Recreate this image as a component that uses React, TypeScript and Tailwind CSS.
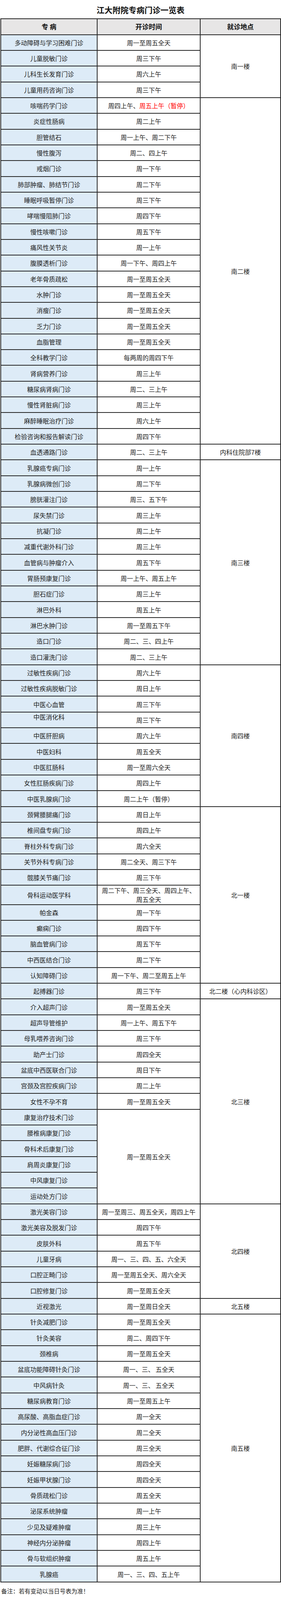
import type { ReactNode } from 'react';

type Row = {
  name: string;
  time?: ReactNode; // undefined = covered by a merged cell above
  timeSpan?: string;
  top?: boolean;
  tall?: boolean;
};

type Group = {
  place: string;
  span: string;
  rows: Row[];
};

const groups: Group[] = [
  {
    place: '南一楼',
    span: 'row-span-4',
    rows: [
      { name: '多动障碍与学习困难门诊', time: '周一至周五全天' },
      { name: '儿童脱敏门诊', time: '周三下午' },
      { name: '儿科生长发育门诊', time: '周六上午' },
      { name: '儿童用药咨询门诊', time: '周三下午' },
    ],
  },
  {
    place: '南二楼',
    span: 'row-span-22',
    rows: [
      {
        name: '咳喘药学门诊',
        time: (
          <>
            周四上午、<span className="text-[#ff0000]">周五上午（暂停）</span>
          </>
        ),
      },
      { name: '炎症性肠病', time: '周二上午' },
      { name: '胆管结石', time: '周一上午、周二下午' },
      { name: '慢性腹泻', time: '周二、四上午' },
      { name: '戒烟门诊', time: '周一下午' },
      { name: '肺部肿瘤、肺结节门诊', time: '周二下午' },
      { name: '睡眠呼吸暂停门诊', time: '周三下午' },
      { name: '哮喘慢阻肺门诊', time: '周四下午' },
      { name: '慢性咳嗽门诊', time: '周五下午' },
      { name: '痛风性关节炎', time: '周一上午' },
      { name: '腹膜透析门诊', time: '周一下午、周四上午' },
      { name: '老年骨质疏松', time: '周一至周五全天' },
      { name: '水肿门诊', time: '周一至周五全天' },
      { name: '消瘦门诊', time: '周一至周五全天' },
      { name: '乏力门诊', time: '周一至周五全天' },
      { name: '血脂管理', time: '周一至周五全天' },
      { name: '全科教学门诊', time: '每两周的周四下午' },
      { name: '肾病营养门诊', time: '周三上午' },
      { name: '糖尿病肾病门诊', time: '周二、三上午' },
      { name: '慢性肾脏病门诊', time: '周三上午' },
      { name: '麻醉睡眠治疗门诊', time: '周六上午' },
      { name: '检验咨询和报告解读门诊', time: '周四下午' },
    ],
  },
  {
    place: '内科住院部7楼',
    span: 'row-span-1',
    rows: [{ name: '血透通路门诊', time: '周二、三上午' }],
  },
  {
    place: '南三楼',
    span: 'row-span-13',
    rows: [
      { name: '乳腺癌专病门诊', time: '周一上午' },
      { name: '乳腺病微创门诊', time: '周二下午' },
      { name: '膀胱灌注门诊', time: '周三、五下午' },
      { name: '尿失禁门诊', time: '周三上午' },
      { name: '抗凝门诊', time: '周二上午' },
      { name: '减重代谢外科门诊', time: '周三上午' },
      { name: '血管病与肿瘤介入', time: '周五下午' },
      { name: '胃肠预康复门诊', time: '周一上午、周五上午' },
      { name: '胆石症门诊', time: '周三上午' },
      { name: '淋巴外科', time: '周五上午' },
      { name: '淋巴水肿门诊', time: '周一至周五下午' },
      { name: '造口门诊', time: '周二、三、四上午' },
      { name: '造口灌洗门诊', time: '周二、三上午' },
    ],
  },
  {
    place: '南四楼',
    span: 'row-span-9',
    rows: [
      { name: '过敏性疾病门诊', time: '周六上午' },
      { name: '过敏性疾病脱敏门诊', time: '周日上午' },
      { name: '中医心血管', time: '周三下午' },
      { name: '中医消化科', time: '周三下午', top: true },
      { name: '中医肝胆病', time: '周六上午' },
      { name: '中医妇科', time: '周五全天' },
      { name: '中医肛肠科', time: '周一至周六全天' },
      { name: '女性肛肠疾病门诊', time: '周四上午' },
      { name: '中医乳腺病门诊', time: '周二上午（暂停）' },
    ],
  },
  {
    place: '北一楼',
    span: 'row-span-11',
    rows: [
      { name: '颈臂腰腿痛门诊', time: '周日上午' },
      { name: '椎间盘专病门诊', time: '周四上午' },
      { name: '脊柱外科专病门诊', time: '周六全天' },
      { name: '关节外科专病门诊', time: '周二全天、周三下午' },
      { name: '髋膝关节痛门诊', time: '周三下午' },
      {
        name: '骨科运动医学科',
        tall: true,
        time: (
          <>
            周二下午、周三全天、周四上午、
            <br />
            周五全天
          </>
        ),
      },
      { name: '帕金森', time: '周一下午' },
      { name: '癫痫门诊', time: '周四下午' },
      { name: '脑血管病门诊', time: '周五下午' },
      { name: '中西医结合门诊', time: '周二下午' },
      { name: '认知障碍门诊', time: '周一下午、周二至周五上午' },
    ],
  },
  {
    place: '北二楼（心内科诊区）',
    span: 'row-span-1',
    rows: [{ name: '起搏器门诊', time: '周三下午' }],
  },
  {
    place: '北三楼',
    span: 'row-span-13',
    rows: [
      { name: '介入超声门诊', time: '周一至周五全天' },
      { name: '超声导管维护', time: '周一上午、周五下午' },
      { name: '母乳喂养咨询门诊', time: '周三下午' },
      { name: '助产士门诊', time: '周四全天' },
      { name: '盆底中西医联合门诊', time: '周日下午' },
      { name: '宫颈及宫腔疾病门诊', time: '周二上午' },
      { name: '女性不孕不育', time: '周一至周五全天' },
      { name: '康复治疗技术门诊', time: '周一至周五全天', timeSpan: 'row-span-6' },
      { name: '腰椎病康复门诊' },
      { name: '骨科术后康复门诊' },
      { name: '肩周炎康复门诊' },
      { name: '中风康复门诊' },
      { name: '运动处方门诊' },
    ],
  },
  {
    place: '北四楼',
    span: 'row-span-6',
    rows: [
      { name: '激光美容门诊', time: '周一至周三、周五全天，周四上午' },
      { name: '激光美容及脱发门诊', time: '周四下午' },
      { name: '皮肤外科', time: '周五下午' },
      { name: '儿童牙病', time: '周一、三、四、五、六全天' },
      { name: '口腔正畸门诊', time: '周一至周五全天、周六全天' },
      { name: '口腔修复门诊', time: '周一至周五全天' },
    ],
  },
  {
    place: '北五楼',
    span: 'row-span-1',
    rows: [{ name: '近视激光', time: '周一至周日全天' }],
  },
  {
    place: '南五楼',
    span: 'row-span-17',
    rows: [
      { name: '针灸减肥门诊', time: '周一至周五全天' },
      { name: '针灸美容', time: '周二、周四下午' },
      { name: '颈椎病', time: '周一至周五全天' },
      { name: '盆底功能障碍针灸门诊', time: '周一、三、 五全天' },
      { name: '中风病针灸', time: '周一、三、 五全天' },
      { name: '糖尿病教育门诊', time: '周一至周五上午' },
      { name: '高尿酸、高脂血症门诊', time: '周一全天' },
      { name: '内分泌性高血压门诊', time: '周二全天' },
      { name: '肥胖、代谢综合征门诊', time: '周三全天' },
      { name: '妊娠糖尿病门诊', time: '周四全天' },
      { name: '妊娠甲状腺门诊', time: '周四全天' },
      { name: '骨质疏松门诊', time: '周五全天' },
      { name: '泌尿系统肿瘤', time: '周一上午' },
      { name: '少见及疑难肿瘤', time: '周三上午' },
      { name: '神经内分泌肿瘤', time: '周四上午' },
      { name: '骨与软组织肿瘤', time: '周五上午' },
      { name: '乳腺癌', time: '周一、三、四、五上午' },
    ],
  },
];

export default function App() {
  return (
    // Full-height sheet: title / table / note share the window height in the sheet's proportions
    <div className="w-[720px] h-screen grid grid-rows-[49fr_4162fr_47fr] bg-white font-['Noto_Sans_CJK_SC','Noto_Sans',sans-serif] text-[#222]">
      {/* Title */}
      <div className="pt-[4px] flex items-center justify-center">
        <h1 className="text-[20.5px] font-bold text-[#111] leading-none">江大附院专病门诊一览表</h1>
      </div>

      {/* Table: dark background + gaps make the grid lines */}
      <div className="ml-[1px] w-[719px] h-full grid grid-cols-[245px_262px_204px] grid-rows-[40fr_repeat(54,39.93fr)_49fr_repeat(43,39.93fr)] gap-[2px] p-[2px] bg-[#262626] overflow-hidden">
        {/* Header */}
        <div className="col-start-1 bg-[#e7e6e6] flex items-center justify-center text-[17px] leading-[20px] font-bold text-[#111]">
          专 病
        </div>
        <div className="col-start-2 bg-[#e7e6e6] flex items-center justify-center text-[17px] leading-[20px] font-bold text-[#111]">
          开诊时间
        </div>
        <div className="col-start-3 bg-[#e7e6e6] flex items-center justify-center text-[17px] leading-[20px] font-bold text-[#111]">
          就诊地点
        </div>

        {groups.map((g) =>
          g.rows.map((r, i) => (
            <Cells key={g.place + r.name} row={r} place={i === 0 ? g.place : undefined} placeSpan={g.span} />
          ))
        )}
      </div>

      {/* Footnote */}
      <p className="pt-[12px] pl-[3px] text-[15px] leading-[20px] text-[#222]">备注：若有变动以当日号表为准！</p>
    </div>
  );
}

function Cells({ row, place, placeSpan }: { row: Row; place?: string; placeSpan: string }) {
  return (
    <>
      <div
        className={`col-start-1 min-h-0 bg-[#ddebf7] flex justify-center text-[16px] ${
          row.top ? 'items-start leading-[22px]' : 'items-center leading-[20px]'
        }`}
      >
        {row.name}
      </div>
      {row.time !== undefined && (
        <div
          className={`col-start-2 min-h-0 bg-white flex items-center justify-center text-center text-[16px] ${
            row.tall ? 'leading-[23px]' : 'leading-[20px]'
          } ${row.timeSpan ?? ''}`}
        >
          <span>{row.time}</span>
        </div>
      )}
      {place && (
        <div className={`col-start-3 min-h-0 bg-white flex items-center justify-center text-[16px] leading-[20px] ${placeSpan}`}>
          {place}
        </div>
      )}
    </>
  );
}
